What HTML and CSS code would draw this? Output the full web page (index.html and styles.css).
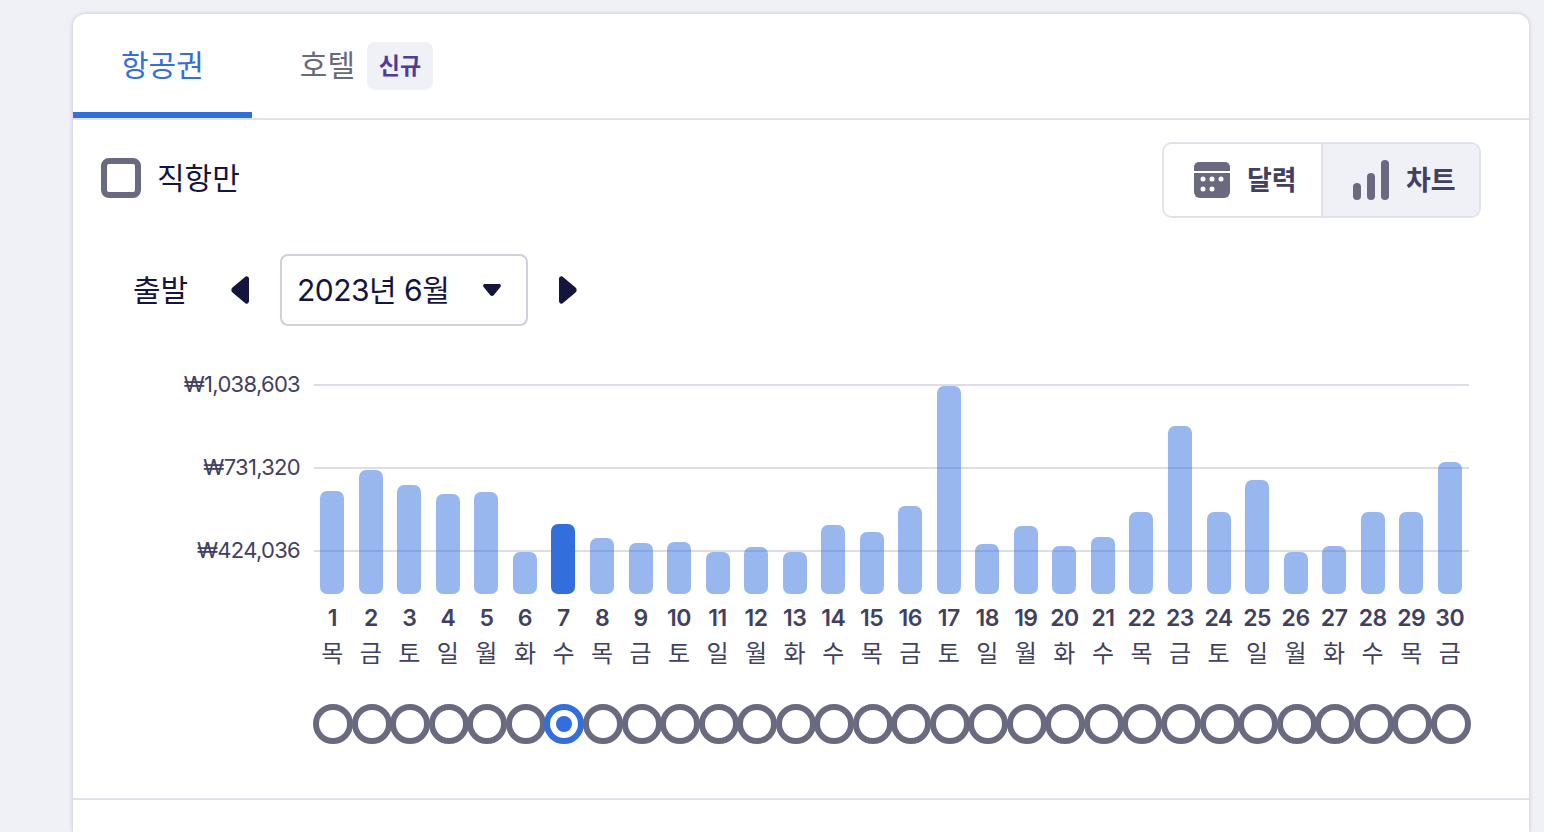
FILE: index.html
```html
<!DOCTYPE html>
<html lang="ko">
<head>
  <meta charset="UTF-8">
  <title>항공권 가격 차트</title>
  <link rel="stylesheet" href="styles.css">
</head>
<body>
  <div class="card">
    <div class="tabs">
      <div class="tab active">항공권</div>
      <div class="tab">호텔 <span class="badge">신규</span></div>
    </div>

    <div class="filter-row">
      <label class="check"><span class="check-box"></span><span class="nudge">직항만</span></label>
      <div class="toggle">
        <button class="toggle-btn">
          <svg width="36" height="36" viewBox="0 0 36 36">
            <path d="M5 0h26a5 5 0 0 1 5 5v4H0V5a5 5 0 0 1 5-5z" fill="#696a80"/>
            <path d="M0 11h36v19a6 6 0 0 1-6 6H6a6 6 0 0 1-6-6z" fill="#696a80"/>
            <g fill="#fff">
              <circle cx="9" cy="17" r="2.500"/><circle cx="18" cy="17" r="2.500"/><circle cx="27" cy="17" r="2.500"/>
              <circle cx="9" cy="27" r="2.500"/><circle cx="18" cy="27" r="2.500"/>
            </g>
          </svg>
          <span class="nudge-sm">달력</span>
        </button>
        <button class="toggle-btn selected">
          <svg width="36" height="40" viewBox="0 0 36 40">
            <rect x="0" y="23" width="8" height="17" rx="4" fill="#696a80"/>
            <rect x="14" y="13" width="8" height="27" rx="4" fill="#696a80"/>
            <rect x="28" y="0" width="8" height="40" rx="4" fill="#696a80"/>
          </svg>
          <span class="nudge-sm">차트</span>
        </button>
      </div>
    </div>

    <div class="period-row">
      <span class="period-label nudge">출발</span>
      <svg class="arrow-left" width="18" height="28" viewBox="0 0 18 28">
        <path d="M14 1 1.500 11.500a3.300 3.300 0 0 0 0 5L14 27a2.400 2.400 0 0 0 4-1.800V2.800A2.400 2.400 0 0 0 14 1z" fill="#14143c"/>
      </svg>
      <div class="month-select">
        <span class="nudge">2023년 6월</span>
        <svg width="18" height="12" viewBox="0 0 18 12">
          <path d="M2 0h14a1.800 1.800 0 0 1 1.400 3l-6.500 8a2.400 2.400 0 0 1-3.800 0L.6 3A1.800 1.800 0 0 1 2 0z" fill="#14143c"/>
        </svg>
      </div>
      <svg class="arrow-right" width="18" height="28" viewBox="0 0 18 28">
        <path d="M4 1l12.500 10.500a3.300 3.300 0 0 1 0 5L4 27a2.400 2.400 0 0 1-4-1.800V2.800A2.400 2.400 0 0 1 4 1z" fill="#14143c"/>
      </svg>
    </div>

    <div class="chart">
      <div class="grid-lines">
        <div class="grid-row"><span class="price">₩1,038,603</span><span class="line"></span></div>
        <div class="grid-row"><span class="price">₩731,320</span><span class="line"></span></div>
        <div class="grid-row"><span class="price">₩424,036</span><span class="line"></span></div>
      </div>
      <div class="bars days">
        <div class="bar" style="height:103px"></div>
        <div class="bar" style="height:124px"></div>
        <div class="bar" style="height:109px"></div>
        <div class="bar" style="height:100px"></div>
        <div class="bar" style="height:102px"></div>
        <div class="bar" style="height:42px"></div>
        <div class="bar current" style="height:70px"></div>
        <div class="bar" style="height:56px"></div>
        <div class="bar" style="height:51px"></div>
        <div class="bar" style="height:52px"></div>
        <div class="bar" style="height:42px"></div>
        <div class="bar" style="height:47px"></div>
        <div class="bar" style="height:42px"></div>
        <div class="bar" style="height:69px"></div>
        <div class="bar" style="height:62px"></div>
        <div class="bar" style="height:88px"></div>
        <div class="bar" style="height:208px"></div>
        <div class="bar" style="height:50px"></div>
        <div class="bar" style="height:68px"></div>
        <div class="bar" style="height:48px"></div>
        <div class="bar" style="height:57px"></div>
        <div class="bar" style="height:82px"></div>
        <div class="bar" style="height:168px"></div>
        <div class="bar" style="height:82px"></div>
        <div class="bar" style="height:114px"></div>
        <div class="bar" style="height:42px"></div>
        <div class="bar" style="height:48px"></div>
        <div class="bar" style="height:82px"></div>
        <div class="bar" style="height:82px"></div>
        <div class="bar" style="height:132px"></div>
      </div>
    </div>

    <div class="days day-numbers">
      <span>1</span><span>2</span><span>3</span><span>4</span><span>5</span><span>6</span>
      <span>7</span><span>8</span><span>9</span><span>10</span><span>11</span><span>12</span>
      <span>13</span><span>14</span><span>15</span><span>16</span><span>17</span><span>18</span>
      <span>19</span><span>20</span><span>21</span><span>22</span><span>23</span><span>24</span>
      <span>25</span><span>26</span><span>27</span><span>28</span><span>29</span><span>30</span>
    </div>
    <div class="days day-names">
      <span>목</span><span>금</span><span>토</span><span>일</span><span>월</span><span>화</span>
      <span>수</span><span>목</span><span>금</span><span>토</span><span>일</span><span>월</span>
      <span>화</span><span>수</span><span>목</span><span>금</span><span>토</span><span>일</span>
      <span>월</span><span>화</span><span>수</span><span>목</span><span>금</span><span>토</span>
      <span>일</span><span>월</span><span>화</span><span>수</span><span>목</span><span>금</span>
    </div>
    <div class="days radios">
      <i></i><i></i><i></i><i></i><i></i><i></i>
      <i class="on"></i><i></i><i></i><i></i><i></i><i></i>
      <i></i><i></i><i></i><i></i><i></i><i></i>
      <i></i><i></i><i></i><i></i><i></i><i></i>
      <i></i><i></i><i></i><i></i><i></i><i></i>
    </div>

    <div class="divider"></div>
  </div>
</body>
</html>
```

FILE: styles.css
```css
html, body {
  height: 100%;
}
body {
  margin: 0;
  padding: 14px 15px 0 73px;
  box-sizing: border-box;
  overflow: hidden;
  background-color: #f0f1f7;
  color: #14143c;
  font-family: Inter, "Noto Sans CJK KR", sans-serif;
}
.card {
  height: 100%;
  background-color: #fff;
  border-radius: 12px 12px 0 0;
  box-shadow: 0 0 4px rgba(20, 20, 60, 0.22);
}
.nudge {
  padding-bottom: 5px;
}
.nudge-sm {
  padding-bottom: 4px;
}

/* tabs */
.tabs {
  display: flex;
  height: 104px;
  border-bottom: 2px solid #e0e1e9;
}
.tab {
  display: flex;
  align-items: center;
  gap: 12px;
  height: 98px;
  padding: 0 48px;
  font-size: 30px;
  color: #696a80;
}
.tab.active {
  height: 98px;
  color: #326fdd;
  border-bottom: 6px solid #326fdd;
}
.badge {
  display: flex;
  align-items: center;
  justify-content: center;
  width: 66px;
  height: 48px;
  box-sizing: border-box;
  margin-top: 6px;
  padding-bottom: 4px;
  border-radius: 8px;
  background-color: #f0f1f7;
  color: #4d3d96;
  font-size: 23px;
  font-weight: 700;
}

/* direct only + view switch */
.filter-row {
  display: flex;
  justify-content: space-between;
  align-items: flex-start;
  padding: 22px 48px 0 28px;
}
.check {
  display: flex;
  align-items: center;
  gap: 16px;
  height: 72px;
  font-size: 30px;
}
.check-box {
  width: 40px;
  height: 40px;
  box-sizing: border-box;
  border: 6px solid #696a80;
  border-radius: 8px;
}
.toggle {
  display: flex;
  height: 76px;
  box-sizing: border-box;
  border: 2px solid #e0e1e9;
  border-radius: 10px;
  overflow: hidden;
}
.toggle-btn {
  display: flex;
  align-items: center;
  gap: 17px;
  width: 157px;
  padding: 0 0 0 30px;
  box-sizing: border-box;
  border: none;
  background-color: #fff;
  color: #41415f;
  font-family: inherit;
  font-size: 27px;
  font-weight: 700;
}
.toggle-btn.selected {
  width: 158px;
  border-left: 2px solid #e0e1e9;
  background-color: #f0f1f7;
}

/* month picker */
.period-row {
  display: flex;
  align-items: center;
  margin-top: 36px;
  padding-left: 60px;
  height: 72px;
}
.period-label {
  width: 98px;
  font-size: 30px;
}
.month-select {
  display: flex;
  align-items: center;
  justify-content: space-between;
  width: 248px;
  height: 72px;
  box-sizing: border-box;
  margin: 0 31px;
  padding: 0 25px 0 15px;
  border: 2px solid #cfd0dc;
  border-radius: 8px;
  font-size: 30px;
  letter-spacing: -0.5px;
}

/* chart */
.chart {
  display: grid;
  grid-template-rows: 210px;
  margin-top: 58px;
}
.grid-lines, .bars {
  grid-area: 1 / 1;
}
.grid-row {
  display: flex;
  height: 83px;
}
.price {
  width: 227px;
  margin-top: -15px;
  height: 30px;
  line-height: 30px;
  text-align: right;
  font-size: 22px;
  letter-spacing: -0.7px;
  color: #41415f;
}
.line {
  flex: 1;
  height: 2px;
  margin: 0 60px 0 14px;
  background-color: #dcdde6;
}
.days {
  display: grid;
  grid-template-columns: repeat(30, 1fr);
  margin: 0 60px 0 240px;
  justify-items: center;
}
.bars {
  height: 210px;
  align-items: end;
}
.bar {
  width: 24px;
  border-radius: 7px;
  background-color: rgba(50, 111, 221, 0.5);
}
.bar.current {
  background-color: #326fdd;
}
.day-numbers {
  margin-top: 8px;
  height: 32px;
  line-height: 32px;
  font-size: 23px;
  font-weight: 600;
  letter-spacing: -0.5px;
  color: #41415f;
}
.day-numbers span, .day-names span {
  white-space: nowrap;
}
.day-names {
  margin-top: 4px;
  height: 32px;
  line-height: 32px;
  font-size: 24px;
  color: #41415f;
}
.radios {
  margin: 34px 59px 0 241px;
}
.radios i {
  display: flex;
  align-items: center;
  justify-content: center;
  width: 40px;
  height: 40px;
  margin: 0 -1px;
  box-sizing: border-box;
  border: 6px solid #696a80;
  border-radius: 50%;
  background-color: #fff;
}
.radios i.on {
  border-color: #326fdd;
  position: relative;
}
.radios i.on::after {
  content: "";
  width: 16px;
  height: 16px;
  border-radius: 50%;
  background-color: #326fdd;
}
.divider {
  height: 2px;
  margin-top: 54px;
  background-color: #e0e1e9;
}
```
